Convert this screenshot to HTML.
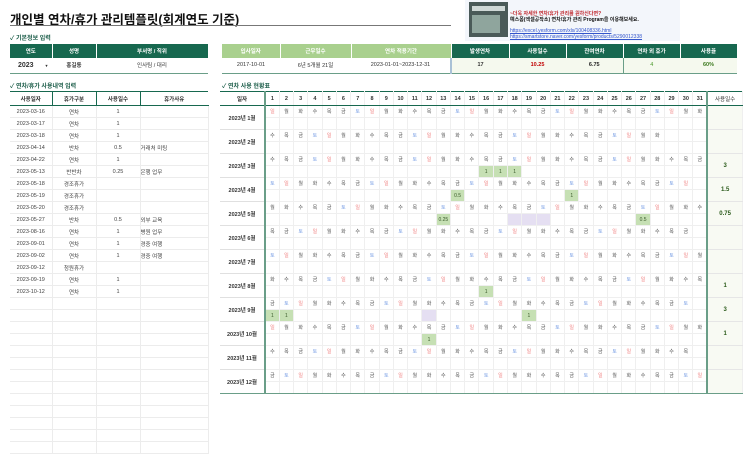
<!DOCTYPE html>
<html><head><meta charset="utf-8"><style>
*{margin:0;padding:0;box-sizing:border-box}
body{width:743px;height:439px;overflow:hidden;background:#fff;font-family:"Liberation Sans","Noto Sans CJK KR",sans-serif;color:#333;position:relative}
.abs{position:absolute}
table{border-collapse:collapse;table-layout:fixed;position:absolute}
td{text-align:center;vertical-align:middle;white-space:nowrap;overflow:hidden;font-size:5.5px}
.h td{background:#17684f;color:#fff;font-weight:bold;height:14px;border-right:1px solid #fff}
.lg{background:#a9d08e!important;color:#fff}
.sec{font-size:6px;font-weight:bold;color:#1d5e4a}
#left td{height:12px;border-bottom:1px solid #ececec;border-right:1px solid #ececec;color:#444}
#left .h td{height:14px;border-top:1px solid #17684f;border-bottom:1px solid #17684f;background:#fff;color:#333;border-right:1px solid #17684f}
#cal td{height:12px;border-right:1px solid #efefef;border-bottom:1px solid #efefef;font-size:5px;color:#555;padding:0}
#cal .hd td{height:14px;border-top:1.5px solid #17684f;border-bottom:1.5px solid #17684f;font-weight:bold;font-size:5.5px;color:#333}
#cal td.m{border-right:2px solid #6a9e88;font-weight:bold;color:#333;font-size:5.5px;border-bottom:1px solid #e0e0e0}
#cal td.su{border-left:2px solid #6a9e88;background:#f8faf3;font-weight:bold;color:#2a5a1a;font-size:6px;border-bottom:1px solid #e6e6e6}
#cal td.r{color:#f08080}#cal td.b{color:#7fa3e6}
#cal td.g{background:#c6e0b4;color:#3a5a2a}
#cal td.p{background:#e5dff2}
#cal tr.lst td{border-bottom:1.5px solid #6a9e88}
</style></head><body>
<div class="abs" style="left:10px;top:9px;font-size:12.5px;font-weight:bold;color:#111">개인별 연차/휴가 관리템플릿(회계연도 기준)</div>
<div class="abs" style="left:10px;top:25px;width:441px;height:1px;background:#777"></div>
<div class="abs" style="left:465px;top:0;width:215px;height:41px;background:#f3f6fb"></div>
<div class="abs" style="left:469px;top:2px;width:39px;height:35px;background:#4a5a58"><div style="margin:4px 3px;height:5px;background:#cfd8d6"></div><div style="margin:2px 8px 0 3px;height:18px;background:#8fa59d"></div></div>
<div class="abs" style="left:510px;top:11px;font-size:5px;line-height:6px">
<div style="color:#c0272d;font-weight:bold">~더욱 자세한 연차/휴가 관리를 원하신다면?</div>
<div style="color:#111;font-weight:bold">예스폼(엑셀공작소) 연차/휴가 관리 Program을 이용해보세요.</div>
<div style="height:5px"></div>
<div style="color:#3355cc;text-decoration:underline">https://excel.yesform.com/xls/100408336.html</div>
<div style="color:#3355cc;text-decoration:underline">https://smartstore.naver.com/yesform/products/5290012338</div>
</div>
<div class="abs sec" style="left:10px;top:33px">✓ 기본정보 입력</div>
<table style="left:10px;top:44px;width:198px">
<colgroup><col style="width:42px"><col style="width:44px"><col style="width:112px"></colgroup>
<tr class="h"><td>연도</td><td>성명</td><td>부서명 / 직위</td></tr>
<tr><td style="height:15px;font-size:7px;font-weight:bold;border-bottom:1px solid #6a9e88;text-align:left;padding-left:8px">2023 <span style="font-size:4px;margin-left:10px">▾</span></td><td style="border-bottom:1px solid #6a9e88;font-weight:bold">홍길동</td><td style="border-bottom:1px solid #6a9e88">인사팀 / 대리</td></tr>
</table>
<table style="left:222px;top:44px;width:515px">
<colgroup><col style="width:58px"><col style="width:71px"><col style="width:100px"><col style="width:58px"><col style="width:57px"><col style="width:57px"><col style="width:57px"><col style="width:57px"></colgroup>
<tr class="h"><td class="lg">입사일자</td><td class="lg">근무일수</td><td class="lg">연차 적용기간</td><td>발생연차</td><td>사용일수</td><td>잔여연차</td><td>연차 외 휴가</td><td>사용율</td></tr>
<tr style="height:15px"><td style="border-bottom:1px solid #6a9e88">2017-10-01</td><td style="border-bottom:1px solid #6a9e88">6년 5개월 21일</td><td style="border-bottom:1px solid #6a9e88;border-right:2px solid #a9c1d6">2023-01-01~2023-12-31</td><td style="background:#f5f9ee;font-weight:bold;border-bottom:1px solid #6a9e88">17</td><td style="background:#f5f9ee;font-weight:bold;color:#c00000;border-bottom:1px solid #6a9e88">10.25</td><td style="background:#f5f9ee;font-weight:bold;color:#222;border-bottom:1px solid #6a9e88">6.75</td><td style="background:#f5f9ee;color:#4a9a2a;border-left:1px solid #6a9e88;border-bottom:1px solid #6a9e88">4</td><td style="background:#f5f9ee;font-weight:bold;color:#3c7a1e;border-bottom:1px solid #6a9e88">60%</td></tr>
</table>
<div class="abs sec" style="left:10px;top:81px">✓ 연차/휴가 사용내역 입력</div>
<div class="abs sec" style="left:222px;top:81px">✓ 연차 사용 현황표</div>
<table id="left" style="left:10px;top:91px;width:198px">
<colgroup><col style="width:42px"><col style="width:44px"><col style="width:44px"><col style="width:68px"></colgroup>
<tr class="h"><td>사용일자</td><td>휴가구분</td><td>사용일수</td><td style="border-right:none">휴가사유</td></tr>
<tr><td>2023-03-16</td><td>연차</td><td>1</td><td></td></tr>
<tr><td>2023-03-17</td><td>연차</td><td>1</td><td></td></tr>
<tr><td>2023-03-18</td><td>연차</td><td>1</td><td></td></tr>
<tr><td>2023-04-14</td><td>반차</td><td>0.5</td><td style="text-align:left">거래처 미팅</td></tr>
<tr><td>2023-04-22</td><td>연차</td><td>1</td><td></td></tr>
<tr><td>2023-05-13</td><td>반반차</td><td>0.25</td><td style="text-align:left">은행 업무</td></tr>
<tr><td>2023-05-18</td><td>경조휴가</td><td></td><td></td></tr>
<tr><td>2023-05-19</td><td>경조휴가</td><td></td><td></td></tr>
<tr><td>2023-05-20</td><td>경조휴가</td><td></td><td></td></tr>
<tr><td>2023-05-27</td><td>반차</td><td>0.5</td><td style="text-align:left">외부 교육</td></tr>
<tr><td>2023-08-16</td><td>연차</td><td>1</td><td style="text-align:left">병원 업무</td></tr>
<tr><td>2023-09-01</td><td>연차</td><td>1</td><td style="text-align:left">경중 여행</td></tr>
<tr><td>2023-09-02</td><td>연차</td><td>1</td><td style="text-align:left">경중 여행</td></tr>
<tr><td>2023-09-12</td><td>청원휴가</td><td></td><td></td></tr>
<tr><td>2023-09-19</td><td>연차</td><td>1</td><td></td></tr>
<tr><td>2023-10-12</td><td>연차</td><td>1</td><td></td></tr>
<tr><td></td><td></td><td></td><td></td></tr><tr><td></td><td></td><td></td><td></td></tr><tr><td></td><td></td><td></td><td></td></tr><tr><td></td><td></td><td></td><td></td></tr><tr><td></td><td></td><td></td><td></td></tr><tr><td></td><td></td><td></td><td></td></tr><tr><td></td><td></td><td></td><td></td></tr><tr><td></td><td></td><td></td><td></td></tr><tr><td></td><td></td><td></td><td></td></tr><tr><td></td><td></td><td></td><td></td></tr><tr><td></td><td></td><td></td><td></td></tr><tr><td></td><td></td><td></td><td></td></tr><tr><td></td><td></td><td></td><td></td></tr>
</table>
<table id="cal" style="left:220px;top:91px;width:523px">
<colgroup><col style="width:45px"><col span="31" style="width:14.28px"><col style="width:35.3px"></colgroup>
<tr class="hd"><td style="border-right:2px solid #6a9e88">일자</td><td>1</td><td>2</td><td>3</td><td>4</td><td>5</td><td>6</td><td>7</td><td>8</td><td>9</td><td>10</td><td>11</td><td>12</td><td>13</td><td>14</td><td>15</td><td>16</td><td>17</td><td>18</td><td>19</td><td>20</td><td>21</td><td>22</td><td>23</td><td>24</td><td>25</td><td>26</td><td>27</td><td>28</td><td>29</td><td>30</td><td>31</td><td style="border-left:2px solid #6a9e88;font-weight:normal">사용일수</td></tr>
<!-- Jan -->
<tr><td class="m" rowspan="2">2023년 1월</td><td class=r>일</td><td>월</td><td>화</td><td>수</td><td>목</td><td>금</td><td class=b>토</td><td class=r>일</td><td>월</td><td>화</td><td>수</td><td>목</td><td>금</td><td class=b>토</td><td class=r>일</td><td>월</td><td>화</td><td>수</td><td>목</td><td>금</td><td class=b>토</td><td class=r>일</td><td>월</td><td>화</td><td>수</td><td>목</td><td>금</td><td class=b>토</td><td class=r>일</td><td>월</td><td>화</td><td class="su" rowspan="2"></td></tr>
<tr><td></td><td></td><td></td><td></td><td></td><td></td><td></td><td></td><td></td><td></td><td></td><td></td><td></td><td></td><td></td><td></td><td></td><td></td><td></td><td></td><td></td><td></td><td></td><td></td><td></td><td></td><td></td><td></td><td></td><td></td><td></td></tr>
<!-- Feb -->
<tr><td class="m" rowspan="2">2023년 2월</td><td>수</td><td>목</td><td>금</td><td class=b>토</td><td class=r>일</td><td>월</td><td>화</td><td>수</td><td>목</td><td>금</td><td class=b>토</td><td class=r>일</td><td>월</td><td>화</td><td>수</td><td>목</td><td>금</td><td class=b>토</td><td class=r>일</td><td>월</td><td>화</td><td>수</td><td>목</td><td>금</td><td class=b>토</td><td class=r>일</td><td>월</td><td>화</td><td></td><td></td><td></td><td class="su" rowspan="2"></td></tr>
<tr><td></td><td></td><td></td><td></td><td></td><td></td><td></td><td></td><td></td><td></td><td></td><td></td><td></td><td></td><td></td><td></td><td></td><td></td><td></td><td></td><td></td><td></td><td></td><td></td><td></td><td></td><td></td><td></td><td></td><td></td><td></td></tr>
<!-- Mar -->
<tr><td class="m" rowspan="2">2023년 3월</td><td>수</td><td>목</td><td>금</td><td class=b>토</td><td class=r>일</td><td>월</td><td>화</td><td>수</td><td>목</td><td>금</td><td class=b>토</td><td class=r>일</td><td>월</td><td>화</td><td>수</td><td>목</td><td>금</td><td class=b>토</td><td class=r>일</td><td>월</td><td>화</td><td>수</td><td>목</td><td>금</td><td class=b>토</td><td class=r>일</td><td>월</td><td>화</td><td>수</td><td>목</td><td>금</td><td class="su" rowspan="2">3</td></tr>
<tr><td></td><td></td><td></td><td></td><td></td><td></td><td></td><td></td><td></td><td></td><td></td><td></td><td></td><td></td><td></td><td class=g>1</td><td class=g>1</td><td class=g>1</td><td></td><td></td><td></td><td></td><td></td><td></td><td></td><td></td><td></td><td></td><td></td><td></td><td></td></tr>
<!-- Apr -->
<tr><td class="m" rowspan="2">2023년 4월</td><td class=b>토</td><td class=r>일</td><td>월</td><td>화</td><td>수</td><td>목</td><td>금</td><td class=b>토</td><td class=r>일</td><td>월</td><td>화</td><td>수</td><td>목</td><td>금</td><td class=b>토</td><td class=r>일</td><td>월</td><td>화</td><td>수</td><td>목</td><td>금</td><td class=b>토</td><td class=r>일</td><td>월</td><td>화</td><td>수</td><td>목</td><td>금</td><td class=b>토</td><td class=r>일</td><td></td><td class="su" rowspan="2">1.5</td></tr>
<tr><td></td><td></td><td></td><td></td><td></td><td></td><td></td><td></td><td></td><td></td><td></td><td></td><td></td><td class=g>0.5</td><td></td><td></td><td></td><td></td><td></td><td></td><td></td><td class=g>1</td><td></td><td></td><td></td><td></td><td></td><td></td><td></td><td></td><td></td></tr>
<!-- May -->
<tr><td class="m" rowspan="2">2023년 5월</td><td>월</td><td>화</td><td>수</td><td>목</td><td>금</td><td class=b>토</td><td class=r>일</td><td>월</td><td>화</td><td>수</td><td>목</td><td>금</td><td class=b>토</td><td class=r>일</td><td>월</td><td>화</td><td>수</td><td>목</td><td>금</td><td class=b>토</td><td class=r>일</td><td>월</td><td>화</td><td>수</td><td>목</td><td>금</td><td class=b>토</td><td class=r>일</td><td>월</td><td>화</td><td>수</td><td class="su" rowspan="2">0.75</td></tr>
<tr><td></td><td></td><td></td><td></td><td></td><td></td><td></td><td></td><td></td><td></td><td></td><td></td><td class=g>0.25</td><td></td><td></td><td></td><td></td><td class=p></td><td class=p></td><td class=p></td><td></td><td></td><td></td><td></td><td></td><td></td><td class=g>0.5</td><td></td><td></td><td></td><td></td></tr>
<!-- Jun -->
<tr><td class="m" rowspan="2">2023년 6월</td><td>목</td><td>금</td><td class=b>토</td><td class=r>일</td><td>월</td><td>화</td><td>수</td><td>목</td><td>금</td><td class=b>토</td><td class=r>일</td><td>월</td><td>화</td><td>수</td><td>목</td><td>금</td><td class=b>토</td><td class=r>일</td><td>월</td><td>화</td><td>수</td><td>목</td><td>금</td><td class=b>토</td><td class=r>일</td><td>월</td><td>화</td><td>수</td><td>목</td><td>금</td><td></td><td class="su" rowspan="2"></td></tr>
<tr><td></td><td></td><td></td><td></td><td></td><td></td><td></td><td></td><td></td><td></td><td></td><td></td><td></td><td></td><td></td><td></td><td></td><td></td><td></td><td></td><td></td><td></td><td></td><td></td><td></td><td></td><td></td><td></td><td></td><td></td><td></td></tr>
<!-- Jul -->
<tr><td class="m" rowspan="2">2023년 7월</td><td class=b>토</td><td class=r>일</td><td>월</td><td>화</td><td>수</td><td>목</td><td>금</td><td class=b>토</td><td class=r>일</td><td>월</td><td>화</td><td>수</td><td>목</td><td>금</td><td class=b>토</td><td class=r>일</td><td>월</td><td>화</td><td>수</td><td>목</td><td>금</td><td class=b>토</td><td class=r>일</td><td>월</td><td>화</td><td>수</td><td>목</td><td>금</td><td class=b>토</td><td class=r>일</td><td>월</td><td class="su" rowspan="2"></td></tr>
<tr><td></td><td></td><td></td><td></td><td></td><td></td><td></td><td></td><td></td><td></td><td></td><td></td><td></td><td></td><td></td><td></td><td></td><td></td><td></td><td></td><td></td><td></td><td></td><td></td><td></td><td></td><td></td><td></td><td></td><td></td><td></td></tr>
<!-- Aug -->
<tr><td class="m" rowspan="2">2023년 8월</td><td>화</td><td>수</td><td>목</td><td>금</td><td class=b>토</td><td class=r>일</td><td>월</td><td>화</td><td>수</td><td>목</td><td>금</td><td class=b>토</td><td class=r>일</td><td>월</td><td>화</td><td>수</td><td>목</td><td>금</td><td class=b>토</td><td class=r>일</td><td>월</td><td>화</td><td>수</td><td>목</td><td>금</td><td class=b>토</td><td class=r>일</td><td>월</td><td>화</td><td>수</td><td>목</td><td class="su" rowspan="2">1</td></tr>
<tr><td></td><td></td><td></td><td></td><td></td><td></td><td></td><td></td><td></td><td></td><td></td><td></td><td></td><td></td><td></td><td class=g>1</td><td></td><td></td><td></td><td></td><td></td><td></td><td></td><td></td><td></td><td></td><td></td><td></td><td></td><td></td><td></td></tr>
<!-- Sep -->
<tr><td class="m" rowspan="2">2023년 9월</td><td>금</td><td class=b>토</td><td class=r>일</td><td>월</td><td>화</td><td>수</td><td>목</td><td>금</td><td class=b>토</td><td class=r>일</td><td>월</td><td>화</td><td>수</td><td>목</td><td>금</td><td class=b>토</td><td class=r>일</td><td>월</td><td>화</td><td>수</td><td>목</td><td>금</td><td class=b>토</td><td class=r>일</td><td>월</td><td>화</td><td>수</td><td>목</td><td>금</td><td class=b>토</td><td></td><td class="su" rowspan="2">3</td></tr>
<tr><td class=g>1</td><td class=g>1</td><td></td><td></td><td></td><td></td><td></td><td></td><td></td><td></td><td></td><td class=p></td><td></td><td></td><td></td><td></td><td></td><td></td><td class=g>1</td><td></td><td></td><td></td><td></td><td></td><td></td><td></td><td></td><td></td><td></td><td></td><td></td></tr>
<!-- Oct -->
<tr><td class="m" rowspan="2">2023년 10월</td><td class=r>일</td><td>월</td><td>화</td><td>수</td><td>목</td><td>금</td><td class=b>토</td><td class=r>일</td><td>월</td><td>화</td><td>수</td><td>목</td><td>금</td><td class=b>토</td><td class=r>일</td><td>월</td><td>화</td><td>수</td><td>목</td><td>금</td><td class=b>토</td><td class=r>일</td><td>월</td><td>화</td><td>수</td><td>목</td><td>금</td><td class=b>토</td><td class=r>일</td><td>월</td><td>화</td><td class="su" rowspan="2">1</td></tr>
<tr><td></td><td></td><td></td><td></td><td></td><td></td><td></td><td></td><td></td><td></td><td></td><td class=g>1</td><td></td><td></td><td></td><td></td><td></td><td></td><td></td><td></td><td></td><td></td><td></td><td></td><td></td><td></td><td></td><td></td><td></td><td></td><td></td></tr>
<!-- Nov -->
<tr><td class="m" rowspan="2">2023년 11월</td><td>수</td><td>목</td><td>금</td><td class=b>토</td><td class=r>일</td><td>월</td><td>화</td><td>수</td><td>목</td><td>금</td><td class=b>토</td><td class=r>일</td><td>월</td><td>화</td><td>수</td><td>목</td><td>금</td><td class=b>토</td><td class=r>일</td><td>월</td><td>화</td><td>수</td><td>목</td><td>금</td><td class=b>토</td><td class=r>일</td><td>월</td><td>화</td><td>수</td><td>목</td><td></td><td class="su" rowspan="2"></td></tr>
<tr><td></td><td></td><td></td><td></td><td></td><td></td><td></td><td></td><td></td><td></td><td></td><td></td><td></td><td></td><td></td><td></td><td></td><td></td><td></td><td></td><td></td><td></td><td></td><td></td><td></td><td></td><td></td><td></td><td></td><td></td><td></td></tr>
<!-- Dec -->
<tr><td class="m" rowspan="2" style="border-bottom:1.5px solid #6a9e88">2023년 12월</td><td>금</td><td class=b>토</td><td class=r>일</td><td>월</td><td>화</td><td>수</td><td>목</td><td>금</td><td class=b>토</td><td class=r>일</td><td>월</td><td>화</td><td>수</td><td>목</td><td>금</td><td class=b>토</td><td class=r>일</td><td>월</td><td>화</td><td>수</td><td>목</td><td>금</td><td class=b>토</td><td class=r>일</td><td>월</td><td>화</td><td>수</td><td>목</td><td>금</td><td class=b>토</td><td class=r>일</td><td class="su" rowspan="2" style="border-bottom:1.5px solid #6a9e88"></td></tr>
<tr class="lst"><td></td><td></td><td></td><td></td><td></td><td></td><td></td><td></td><td></td><td></td><td></td><td></td><td></td><td></td><td></td><td></td><td></td><td></td><td></td><td></td><td></td><td></td><td></td><td></td><td></td><td></td><td></td><td></td><td></td><td></td><td></td></tr>
</table>
</body></html>
